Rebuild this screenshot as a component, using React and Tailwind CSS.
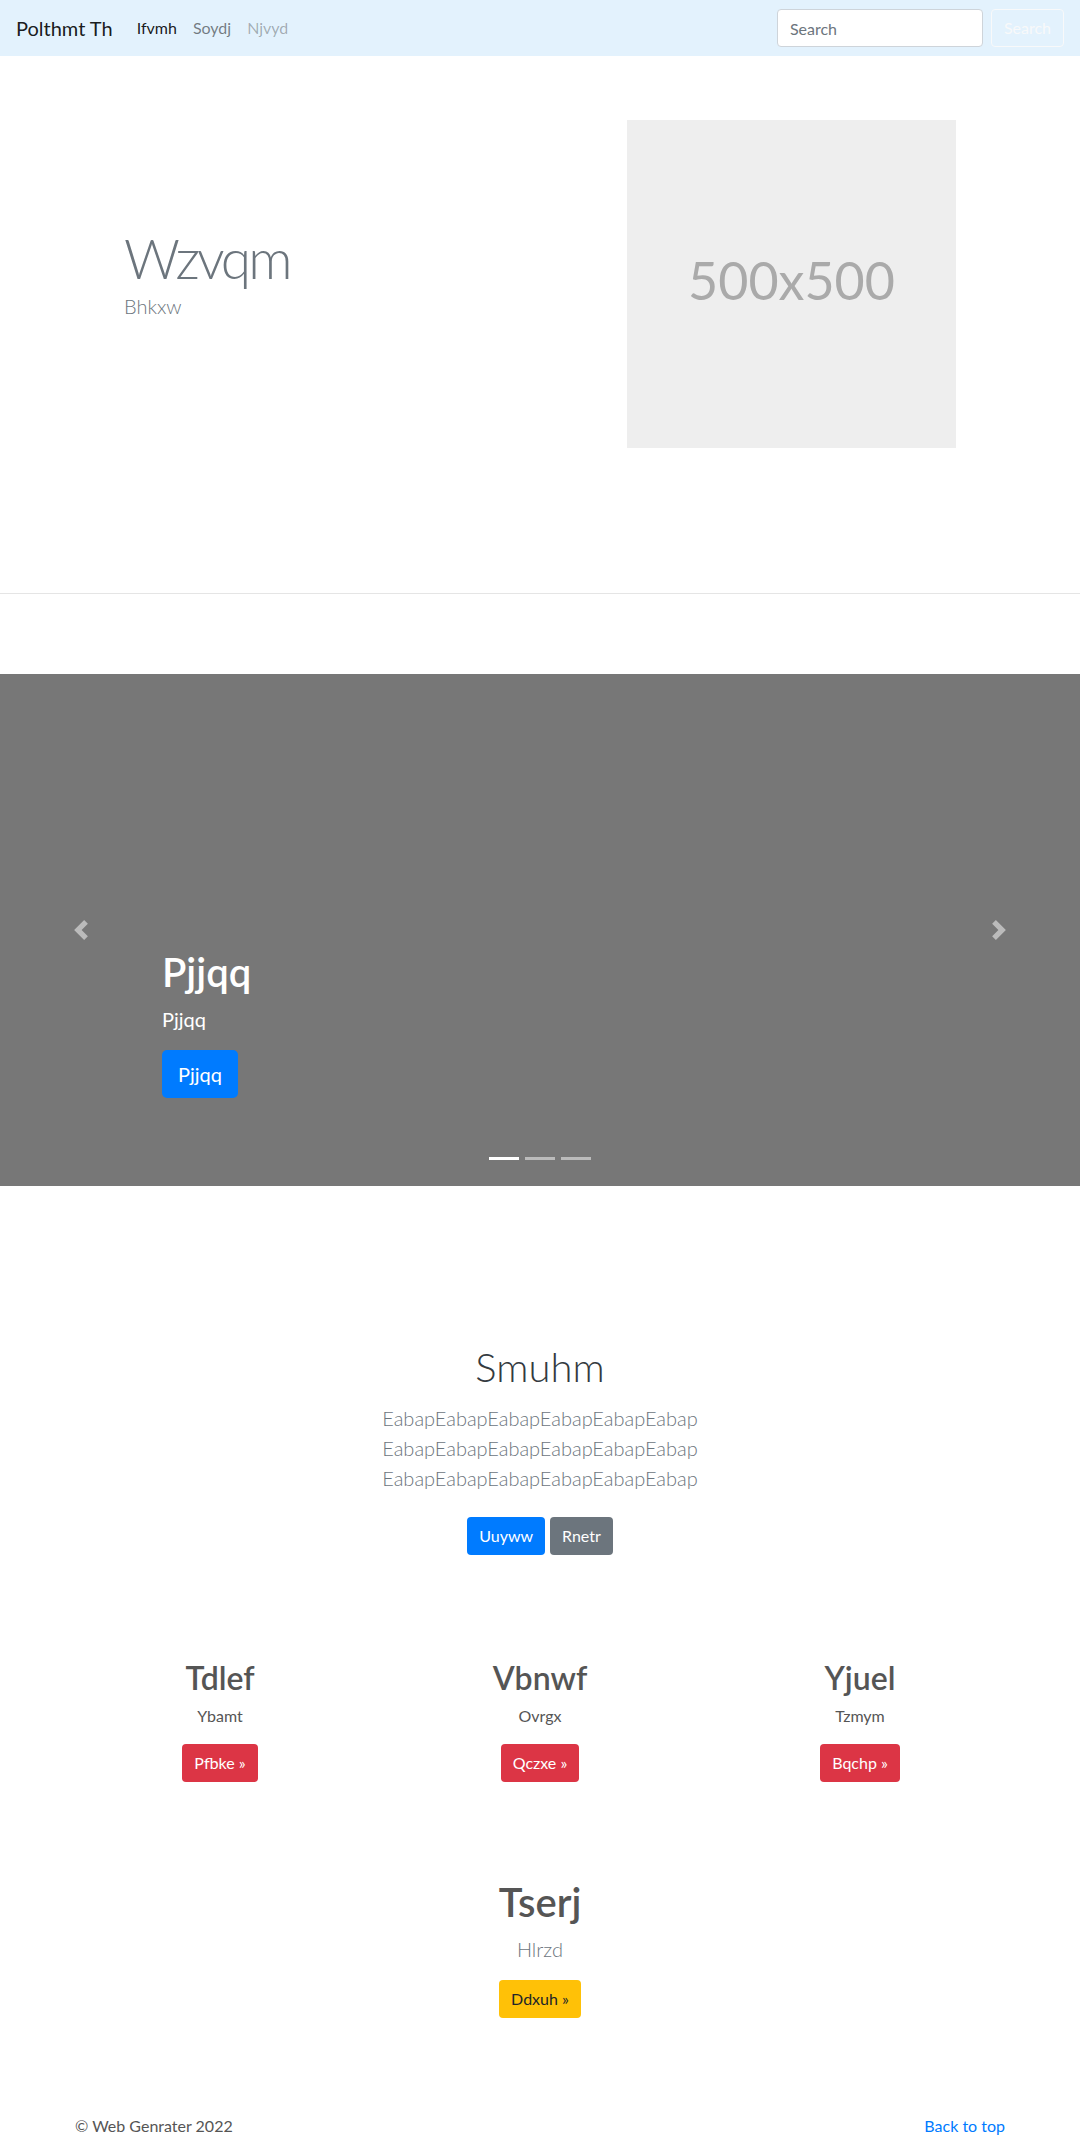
import React from "react";

function Chevron({ dir }) {
  return (
    <svg width="20" height="20" viewBox="0 0 8 8" fill="#fff" className="opacity-50">
      {dir === "left" ? (
        <path d="M5.25 0l-4 4 4 4 1.5-1.5L4.25 4l2.5-2.5L5.25 0z" />
      ) : (
        <path d="M2.75 0l-1.5 1.5L3.75 4l-2.5 2.5L2.75 8l4-4-4-4z" />
      )}
    </svg>
  );
}

function Feature({ title, text, btn }) {
  return (
    <div className="px-[15px] flex flex-col items-center text-center">
      <h2 className="mt-[5px] text-[32px] leading-[1.2] font-semibold text-[#555] mb-[7px]">{title}</h2>
      <p className="text-base leading-6 text-[#555] mb-4">{text}</p>
      <a className="h-[38px] px-3 flex items-center rounded bg-[#dc3545] text-white text-base">{btn}</a>
    </div>
  );
}

export default function App() {
  return (
    <div className="bg-white min-h-[2139px] text-[#212529]" style={{ fontFamily: "Lato, 'Open Sans', sans-serif" }}>
      {/* Navbar */}
      <nav className="h-14 bg-[#e3f2fd] flex items-center px-4">
        <a className="text-xl leading-[30px] py-[5px] mr-4 text-black/90">Polthmt Th</a>
        <div className="flex">
          <a className="px-2 py-2 text-base leading-6 text-black/90">Ifvmh</a>
          <a className="px-2 py-2 text-base leading-6 text-black/50">Soydj</a>
          <a className="px-2 py-2 text-base leading-6 text-black/30">Njvyd</a>
        </div>
        <div className="ml-auto flex items-center">
          <input
            className="h-[38px] w-[206px] bg-white border border-[#ced4da] rounded px-3 text-base text-[#495057] placeholder:text-[#6c757d] outline-none"
            placeholder="Search"
          />
          <button className="ml-2 h-[38px] px-3 border border-[#f8f9fa] rounded text-[#f8f9fa] text-base">Search</button>
        </div>
      </nav>

      {/* Hero */}
      <section className="pt-16">
        <div className="w-[960px] mx-auto grid grid-cols-2">
          <div className="pl-16 flex flex-col justify-center">
            <h1 className="text-[55px] leading-[1.2] font-light tracking-[-3px] text-[#6c757d] mb-0">Wzvqm</h1>
            <p className="text-xl leading-[30px] font-light text-[#6c757d] mb-[23px]">Bhkxw</p>
          </div>
          <div className="pl-[87px]">
            <div className="w-[329px] h-[328px] bg-[#eeeeee] flex items-center justify-center pb-2">
              <span className="text-[52px] text-[#aaaaaa]">500x500</span>
            </div>
          </div>
        </div>
        <hr className="mt-[145px] border-0 border-t border-[#e5e5e5]" />
      </section>

      {/* Carousel */}
      <section className="mt-20 h-[512px] bg-[#777777] relative">
        <div className="absolute left-0 top-0 bottom-0 w-[15%] flex items-center justify-center">
          <Chevron dir="left" />
        </div>
        <div className="absolute right-0 top-0 bottom-0 w-[15%] flex items-center justify-center">
          <Chevron dir="right" />
        </div>
        <div className="absolute left-[15%] right-[15%] bottom-12 py-5 text-white">
          <h1 className="text-[40px] leading-[1.2] font-semibold mb-2">Pjjqq</h1>
          <p className="text-xl leading-[30px] mb-4">Pjjqq</p>
          <div className="mb-5 flex">
            <a className="h-12 px-4 flex items-center rounded-[5px] bg-[#007bff] text-white text-xl">Pjjqq</a>
          </div>
        </div>
        <div className="absolute left-0 right-0 bottom-4 flex justify-center">
          <span className="w-[30px] h-[3px] mx-[3px] my-[10px] bg-white"></span>
          <span className="w-[30px] h-[3px] mx-[3px] my-[10px] bg-white/50"></span>
          <span className="w-[30px] h-[3px] mx-[3px] my-[10px] bg-white/50"></span>
        </div>
      </section>

      {/* Marketing heading */}
      <section className="mt-[157px] flex flex-col items-center text-center">
        <h1 className="text-[40px] leading-[1.2] font-light text-[#343a40] mb-3">Smuhm</h1>
        <p className="text-xl leading-[30px] font-light text-[#6c757d] mb-4">
          EabapEabapEabapEabapEabapEabap
          <br />
          EabapEabapEabapEabapEabapEabap
          <br />
          EabapEabapEabapEabapEabapEabap
        </p>
        <div className="mt-2 flex gap-[5px]">
          <a className="h-[38px] px-3 flex items-center rounded bg-[#007bff] text-white text-base">Uuyww</a>
          <a className="h-[38px] px-3 flex items-center rounded bg-[#6c757d] text-white text-base">Rnetr</a>
        </div>
      </section>

      {/* Features */}
      <section className="mt-[99px] w-[960px] mx-auto grid grid-cols-3">
        <Feature title="Tdlef" text="Ybamt" btn="Pfbke »" />
        <Feature title="Vbnwf" text="Ovrgx" btn="Qczxe »" />
        <Feature title="Yjuel" text="Tzmym" btn="Bqchp »" />
      </section>

      <section className="mt-24 flex flex-col items-center text-center">
        <h2 className="text-[40px] leading-[1.2] font-semibold text-[#555] mb-2">Tserj</h2>
        <p className="text-xl leading-[30px] font-light text-[#6c757d] mb-4">Hlrzd</p>
        <a className="h-[38px] px-3 flex items-center rounded bg-[#ffc107] text-[#212529] text-base">Ddxuh »</a>
      </section>

      {/* Footer */}
      <footer className="mt-24 w-[960px] mx-auto px-[15px] flex justify-between text-base leading-6">
        <p className="text-[#555]">© Web Genrater 2022</p>
        <a className="text-[#007bff]">Back to top</a>
      </footer>
    </div>
  );
}
